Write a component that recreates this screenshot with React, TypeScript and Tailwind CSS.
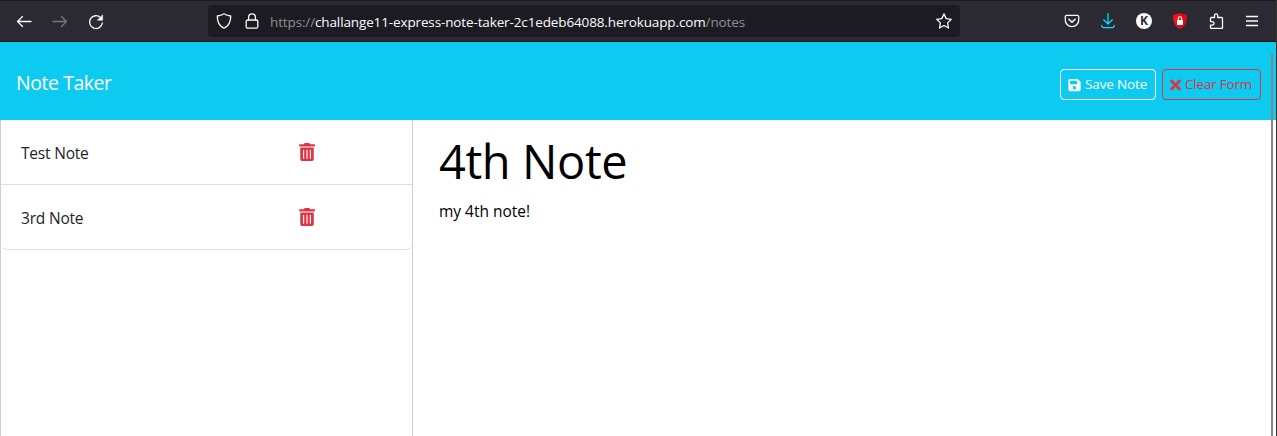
import React from "react";
import { FaSave, FaTimes, FaTrashAlt } from "react-icons/fa";

const notes = ["Test Note", "3rd Note"];

function Icon({ children, className = "" }: { children: React.ReactNode; className?: string }) {
  return (
    <svg
      viewBox="0 0 16 16"
      className={`h-4 w-4 shrink-0 ${className}`}
      fill="none"
      stroke="currentColor"
      strokeWidth="1.3"
      strokeLinecap="round"
      strokeLinejoin="round"
    >
      {children}
    </svg>
  );
}

function Toolbar() {
  return (
    <div className="flex h-[42px] items-center border-t border-b border-t-[#1c1b22] border-b-[#0c0c0d] bg-[#2b2a33] text-[#fbfbfe]">
      <div className="flex w-[208px] gap-5 pt-0.5 pl-4">
        <Icon>
          <path d="M1.500 7.500H15M6.500 2.500 1.500 7.500l5 5" />
        </Icon>
        <Icon className="text-[#77767c]">
          <path d="M1 7.500h13.500M9.500 2.500l5 5-5 5" />
        </Icon>
        <Icon>
          <path d="M14.300 9A6.400 6.400 0 1 1 12.500 3.600" />
          <path d="M14.600 1.200v5h-5z" fill="currentColor" strokeWidth=".6" />
        </Icon>
      </div>
      <div className="flex h-8 w-[752px] items-center rounded bg-[#1c1b22] px-2">
        <Icon>
          <path d="M8 .8c2 1.400 4.200 2 6.700 2.200.1 5.500-1.600 10-6.700 12.200C2.900 13 1.200 8.500 1.300 3 3.800 2.800 6 2.200 8 .8z" />
        </Icon>
        <Icon className="ml-3">
          <rect x="2.200" y="7" width="11.600" height="8.200" rx="1.500" />
          <path d="M4.600 7V4.200a3.400 3.400 0 0 1 6.800 0V7" />
        </Icon>
        <div className="mt-0.5 ml-[10px] w-[666px] font-['Open_Sans',sans-serif] text-[13.500px] leading-5 tracking-[-0.13px] whitespace-nowrap text-[#8f8f95]">
          https://<span className="text-[#fbfbfe]">challange11-express-note-taker-2c1edeb64088.herokuapp.com</span>/notes
        </div>
        <Icon>
          <path d="m8 .9 2.200 4.700 5.100.7-3.700 3.600.9 5.100L8 12.500 3.500 15l.9-5.100L.7 6.300l5.100-.7z" />
        </Icon>
      </div>
      <div className="ml-auto flex items-center gap-5 pr-4">
        <Icon>
          <path d="M2.600 2.300h10.800a1.300 1.300 0 0 1 1.300 1.300v3.700a6.700 6.300 0 0 1-13.400 0V3.600a1.300 1.300 0 0 1 1.300-1.300z" />
          <path d="M4.900 6.300 8 9.200l3.100-2.900" strokeWidth="1.500" />
        </Icon>
        <Icon className="text-[#00ddff]">
          <path d="M8 .7v10M3.700 6.700 8 11l4.300-4.300M1.800 12.500v.6a1.500 1.500 0 0 0 1.500 1.500h9.400a1.500 1.500 0 0 0 1.500-1.500v-.6" />
        </Icon>
        <span className="flex h-4 w-4 items-center justify-center rounded-full bg-white font-['Open_Sans',sans-serif] text-[12px] leading-none font-bold text-[#2b2a33]">
          K
        </span>
        <svg viewBox="0 0 16 16" className="h-4 w-4">
          <path d="M8 0c2.200 1.300 4.500 1.700 7 1.900.2 6.500-1.800 11.300-7 14.100C2.800 13.200.8 8.400 1 1.900 3.500 1.700 5.800 1.300 8 0z" fill="#f01418" />
          <path d="M8 0c2.200 1.300 4.500 1.700 7 1.900.2 6.500-1.800 11.300-7 14.100z" fill="#d60c10" />
          <rect x="5" y="7" width="6" height="5" rx=".5" fill="white" />
          <path d="M6.300 7.500V5.500a1.700 1.700 0 0 1 3.400 0v2" fill="none" stroke="white" strokeWidth="1.100" />
        </svg>
        <Icon>
          <path d="M2.500 7.500V5.500a1 1 0 0 1 1-1h3V2.400a1.600 1.600 0 0 1 3.200 0v2.100h3.800a1 1 0 0 1 1 1v9a1 1 0 0 1-1 1h-10a1 1 0 0 1-1-1v-2.400h1.800a1.600 1.600 0 0 0 0-3.500H2.500z" />
        </Icon>
        <svg viewBox="0 0 16 16" className="h-4 w-4">
          <path d="M2 3.500h12M2 8h12M2 12.500h12" fill="none" stroke="currentColor" strokeWidth="1.300" />
        </svg>
      </div>
    </div>
  );
}

export default function App() {
  return (
    <div className="flex h-[436px] w-[1277px] overflow-hidden bg-white font-['Open_Sans',sans-serif]">
      <div className="relative flex w-[1276px] flex-col">
        <Toolbar />
        <header className="flex h-[78px] shrink-0 items-center justify-between bg-[#0dcaf0] pr-[15px] pl-4">
          <h1 className="mt-1 text-[19.500px] leading-[30px] tracking-[-0.45px] text-white">Note Taker</h1>
          <div className="mt-[7px] flex gap-[6px] text-[13.500px] leading-[21px] tracking-[-0.13px] whitespace-nowrap">
            <button className="flex h-[31px] w-24 items-center rounded border border-white pl-[7px] text-white">
              <FaSave className="mr-1 h-[14px] w-[13px] shrink-0" />
              Save Note
            </button>
            <button className="flex h-[31px] w-[99px] items-center rounded border border-[#dc3545] pl-[7px] tracking-[-0.2px] text-[#dc3545]">
              <FaTimes className="mr-1 h-4 w-[11px] shrink-0" />
              Clear Form
            </button>
          </div>
        </header>
        <main className="flex min-h-0 flex-1">
          <aside className="w-[413px] border-r border-l border-[#cfcfcf]">
            <ul className="rounded-b-md border-b border-[#dfdfdf] text-[15.500px] leading-6 tracking-[-0.2px] text-[#212529]">
              {notes.map((note, index) => (
                <li
                  key={note}
                  className={`flex items-center pl-5 ${index === 0 ? "h-[65px] border-b border-[#dfdfdf]" : "h-16"}`}
                >
                  <span className="mt-0.5 w-[278px]">{note}</span>
                  <FaTrashAlt className="h-[18px] w-4 text-[#dc3545]" />
                </li>
              ))}
            </ul>
          </aside>
          <section className="pt-3 pl-[26px] text-black">
            <h2 className="text-[47px] leading-[58px] tracking-[-0.4px]">4th Note</h2>
            <p className="mt-[9px] text-[15.500px] leading-6 tracking-[-0.02px]">my 4th note!</p>
          </section>
        </main>
        <div className="absolute top-[54px] right-[3px] bottom-0 w-0.5 bg-[#868686]" />
      </div>
      <div className="w-px bg-[#33322f]" />
    </div>
  );
}
